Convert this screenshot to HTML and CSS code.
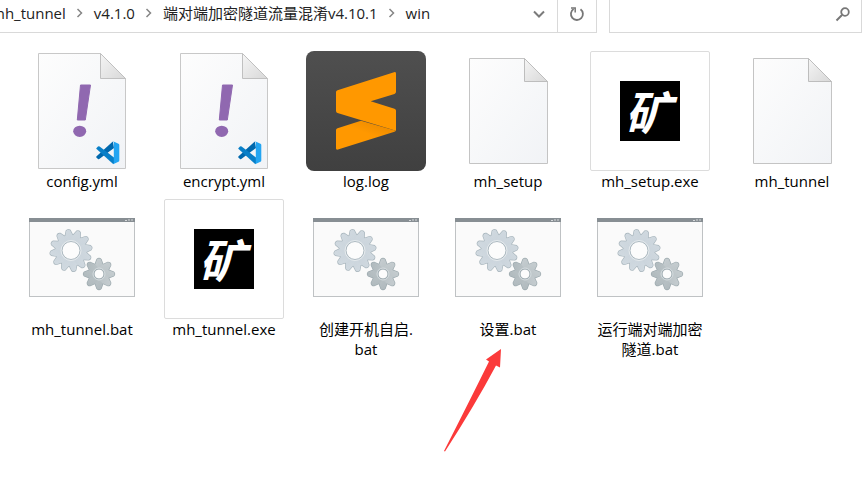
FILE: index.html
```html
<!DOCTYPE html>
<html lang="zh-CN">
<head>
<meta charset="utf-8">
<title>win</title>
<link rel="stylesheet" href="styles.css">
</head>
<body>
<svg class="defs" aria-hidden="true">
  <defs>
    <linearGradient id="paper" x1="0" y1="0" x2="1" y2="1"><stop offset="0" stop-color="#fdfdfd"/><stop offset="1" stop-color="#f1f3f6"/></linearGradient>
    <linearGradient id="fold" x1="0" y1="0" x2="1" y2="1"><stop offset="0" stop-color="#f5f5f5"/><stop offset="1" stop-color="#d8d8d8"/></linearGradient>
    <linearGradient id="tile" x1="0" y1="0" x2="0" y2="1"><stop offset="0" stop-color="#4f4f4f"/><stop offset="1" stop-color="#404040"/></linearGradient>
    <linearGradient id="shade" gradientUnits="userSpaceOnUse" x1="66" y1="88" x2="72" y2="72"><stop offset="0.2" stop-color="#ff9800"/><stop offset="1" stop-color="#ee8c00"/></linearGradient>
    <linearGradient id="steel" gradientUnits="userSpaceOnUse" x1="-18" y1="-18" x2="18" y2="18"><stop offset="0" stop-color="#d3dbe1"/><stop offset="0.5" stop-color="#c9d3db"/><stop offset="1" stop-color="#d5dde3"/></linearGradient>
    <linearGradient id="iron" gradientUnits="userSpaceOnUse" x1="-12" y1="-12" x2="12" y2="12"><stop offset="0" stop-color="#c9d0d3"/><stop offset="1" stop-color="#acb6ba"/></linearGradient>
    <path id="tooth-l" d="M-4-14L-2-20Q0-22 2-20L4-14V14L2 20Q0 22-2 20L-4 14Z"/>
    <path id="tooth-s" d="M-4-9L-2-14.500Q0-16.500 2-14.500L4-9V9L2 14.500Q0 16.500-2 14.500L-4 9Z"/>
    <g id="gear-l">
      <circle r="15.500"/>
      <use href="#tooth-l" transform="rotate(-8)"/><use href="#tooth-l" transform="rotate(22)"/><use href="#tooth-l" transform="rotate(52)"/>
      <use href="#tooth-l" transform="rotate(82)"/><use href="#tooth-l" transform="rotate(112)"/><use href="#tooth-l" transform="rotate(142)"/>
    </g>
    <g id="gear-s">
      <circle r="10"/>
      <use href="#tooth-s"/><use href="#tooth-s" transform="rotate(45)"/><use href="#tooth-s" transform="rotate(90)"/><use href="#tooth-s" transform="rotate(135)"/>
    </g>
    <symbol id="batch" viewBox="0 0 120 120">
      <rect x="7.500" y="19.500" width="105" height="78" fill="#fafafa" stroke="#bfc2c4"/>
      <rect x="7" y="19" width="106" height="4" fill="#878e93"/>
      <path d="M103 21.500h2M106 21h2M109 21h2" stroke="#d5d8da"/>
      <g transform="translate(49 51.500)">
        <use href="#gear-l" fill="none" stroke="#aab7be" stroke-width="1.400"/>
        <use href="#gear-l" fill="url(#steel)"/>
        <circle r="9" fill="#fcfcfc" stroke="#aab7be"/>
        <circle r="10" fill="none" stroke="#e5eaed"/>
      </g>
      <g transform="translate(77 75)">
        <use href="#gear-s" fill="none" stroke="#9ca9ae" stroke-width="1.400"/>
        <use href="#gear-s" fill="url(#iron)"/>
        <circle r="5" fill="#fcfcfc" stroke="#98a6ac"/>
        <circle r="6" fill="none" stroke="#d5dcdf"/>
      </g>
    </symbol>
    <symbol id="page" viewBox="0 0 120 120">
      <path d="M21.500 7.500H76.500L99.500 30.500V112.500H21.500Z" fill="url(#paper)" stroke="#c4c4c4"/>
      <path d="M76.500 7.500V30.500H99.500Z" fill="url(#fold)" stroke="#bdbdbd"/>
    </symbol>
    <symbol id="yaml" viewBox="0 0 120 120">
      <path d="M16.500 2.500H78.500L103.500 27.500V117.500H16.500Z" fill="url(#paper)" stroke="#c8c8c8"/>
      <path d="M78.500 2.500V27.500H103.500Z" fill="url(#fold)" stroke="#c0c0c0"/>
      <path d="M58.500 34H68.500L63.300 69H55.300Z" fill="#9068b0" stroke="#9068b0" stroke-linejoin="round"/>
      <ellipse cx="57.700" cy="80.300" rx="6.500" ry="5.600" fill="#9068b0"/>
      <path d="M74.300 105.600L90.800 90.500L92 97L77.600 107.800Q76.800 108.400 76 107.900L74.300 106.400Z" fill="#0068ad"/>
      <path d="M74.300 97.200L76 95.500Q76.800 95 77.600 95.600L92 106.500V113L90.800 112.700L74.300 97.800Z" fill="#087fc8"/>
      <path d="M91 90.200L96.500 92.700Q97.300 93.100 97.300 94V109.500Q97.300 110.400 96.500 110.800L91 113.200Q91.800 112.600 91.800 111.500V92Q91.800 90.700 91 90.200Z" fill="#23a5f2"/>
    </symbol>
    <symbol id="sublime" viewBox="0 0 120 120">
      <rect width="120" height="120" rx="8" fill="url(#tile)"/>
      <path d="M31.500 77.200L55 69.700L90 79.700L88.500 80.700L32 98.500Q30 99 30 97.500V79Q30 77.700 31.500 77.200Z" fill="url(#shade)"/>
      <path d="M31.500 39.200L88 21.200Q90 20.700 90 22.500V41Q90 42.300 88.500 42.900L64.700 50.300L88.500 57.700Q90 58.200 90 59.500V79.700L31.500 62Q30 61.500 30 60V41Q30 39.700 31.500 39.200Z" fill="#ff9800"/>
    </symbol>
    <symbol id="chevron" viewBox="0 0 8 12"><path d="M1.500 2L5.500 6L1.500 10" fill="none" stroke="#858585" stroke-width="1.500"/></symbol>
  </defs>
</svg>

<header class="toolbar">
  <div class="address">
    <nav class="crumbs" aria-label="路径">
      <a href="#">mh_tunnel</a><svg class="sep"><use href="#chevron"/></svg>
      <a href="#">v4.1.0</a><svg class="sep"><use href="#chevron"/></svg>
      <a href="#">端对端加密隧道流量混淆v4.10.1</a><svg class="sep"><use href="#chevron"/></svg>
      <a href="#">win</a>
    </nav>
    <button class="tool history" aria-label="历史记录"><svg width="14" height="10" viewBox="0 0 14 10"><path d="M2 2.500L7 7.500L12 2.500" fill="none" stroke="#7b7b7b" stroke-width="2"/></svg></button>
    <button class="tool refresh" aria-label="刷新"><svg width="16" height="16" viewBox="0 0 16 16"><path d="M11.500 3.200A6 6 0 1 1 4.600 3" fill="none" stroke="#777" stroke-width="1.800"/><path d="M2 2H6.200V6.500" fill="none" stroke="#777" stroke-width="1.500"/></svg></button>
  </div>
  <form class="search">
    <input type="search" aria-label="搜索">
    <button class="tool find" type="button" aria-label="开始搜索"><svg width="16" height="16" viewBox="0 0 16 16"><circle cx="10" cy="6" r="3.800" fill="none" stroke="#777" stroke-width="1.800"/><path d="M7 9L1.500 14.500" stroke="#777" stroke-width="2"/></svg></button>
  </form>
</header>

<main>
  <ul class="files">
    <li><button class="file"><svg class="icon"><use href="#yaml"/></svg><span class="name">config.yml</span></button></li>
    <li><button class="file"><svg class="icon"><use href="#yaml"/></svg><span class="name">encrypt.yml</span></button></li>
    <li><button class="file"><svg class="icon"><use href="#sublime"/></svg><span class="name">log.log</span></button></li>
    <li><button class="file"><svg class="icon"><use href="#page"/></svg><span class="name">mh_setup</span></button></li>
    <li><button class="file"><span class="icon framed"><span class="seal">矿</span></span><span class="name">mh_setup.exe</span></button></li>
    <li><button class="file"><svg class="icon"><use href="#page"/></svg><span class="name">mh_tunnel</span></button></li>
    <li><button class="file"><svg class="icon"><use href="#batch"/></svg><span class="name">mh_tunnel.bat</span></button></li>
    <li><button class="file"><span class="icon framed"><span class="seal">矿</span></span><span class="name">mh_tunnel.exe</span></button></li>
    <li><button class="file"><svg class="icon"><use href="#batch"/></svg><span class="name">创建开机自启.<wbr>bat</span></button></li>
    <li class="marked"><button class="file"><svg class="icon"><use href="#batch"/></svg><span class="name">设置.bat</span></button>
      <svg class="arrow" width="60" height="106" viewBox="0 0 60 106" aria-hidden="true"><path d="M58 2L43 12.500L46 14.500Q26 55 1 104L2 104.500Q32 58 53 18.500L57 20.500Z" fill="#fb3a3a"/></svg></li>
    <li><button class="file"><svg class="icon"><use href="#batch"/></svg><span class="name">运行端对端加密隧道.bat</span></button></li>
  </ul>
</main>
</body>
</html>
```
FILE: styles.css
```css
* { box-sizing: border-box; }

body {
  margin: 0;
  background: #fff;
  color: #000;
  font-family: "Open Sans", "Noto Sans CJK SC", sans-serif;
  font-size: 15px;
  line-height: 20px;
}

button {
  margin: 0;
  padding: 0;
  border: 0;
  background: none;
  color: inherit;
  font: inherit;
}

a { color: inherit; text-decoration: none; }

.defs { position: absolute; width: 0; height: 0; }

.toolbar {
  display: flex;
  gap: 12px;
  height: 33px;
}

.address {
  display: flex;
  flex: 1;
  min-width: 0;
  border: solid #d9d9d9;
  border-width: 0 1px 1px 0;
}

.crumbs {
  display: flex;
  flex: 1;
  align-items: center;
  min-width: 0;
  margin-left: -9px;
  padding-bottom: 6px;
  color: #222;
  white-space: nowrap;
}

.sep {
  flex: none;
  width: 8px;
  height: 12px;
  margin: 0 10px;
}

.tool {
  display: flex;
  align-items: center;
  justify-content: center;
  padding-bottom: 4px;
}

.history { width: 37px; }

.refresh {
  width: 39px;
  border-left: 1px solid #d9d9d9;
}

.search {
  display: flex;
  width: 253px;
  border: solid #d9d9d9;
  border-width: 0 1px 1px;
}

.search input {
  flex: 1;
  min-width: 0;
  border: 0;
  outline: 0;
  background: none;
  font: inherit;
}

.find { width: 36px; }

main {
  min-height: calc(100vh - 33px);
  overflow-x: clip;
}

.files {
  display: grid;
  grid-template-columns: repeat(auto-fill, 142px);
  grid-auto-rows: minmax(148px, auto);
  margin: 0 -12px 0 0;
  padding: 18px 0 0 11px;
  list-style: none;
}

.file {
  display: flex;
  flex-direction: column;
  align-items: center;
  width: 100%;
}

.icon {
  display: block;
  width: 120px;
  height: 120px;
}

.framed {
  display: grid;
  place-items: center;
  border: 1px solid #dcdcdc;
  border-radius: 2px;
}

.seal {
  width: 60px;
  height: 60px;
  padding-right: 4px;
  background: #000;
  color: #fff;
  font-family: "Noto Sans CJK SC", sans-serif;
  font-size: 46px;
  font-style: italic;
  font-weight: 700;
  line-height: 58px;
  text-align: center;
}

.name {
  max-width: 110px;
  text-align: center;
}

.marked { position: relative; }

.arrow {
  position: absolute;
  top: 148px;
  left: 6px;
}
```
